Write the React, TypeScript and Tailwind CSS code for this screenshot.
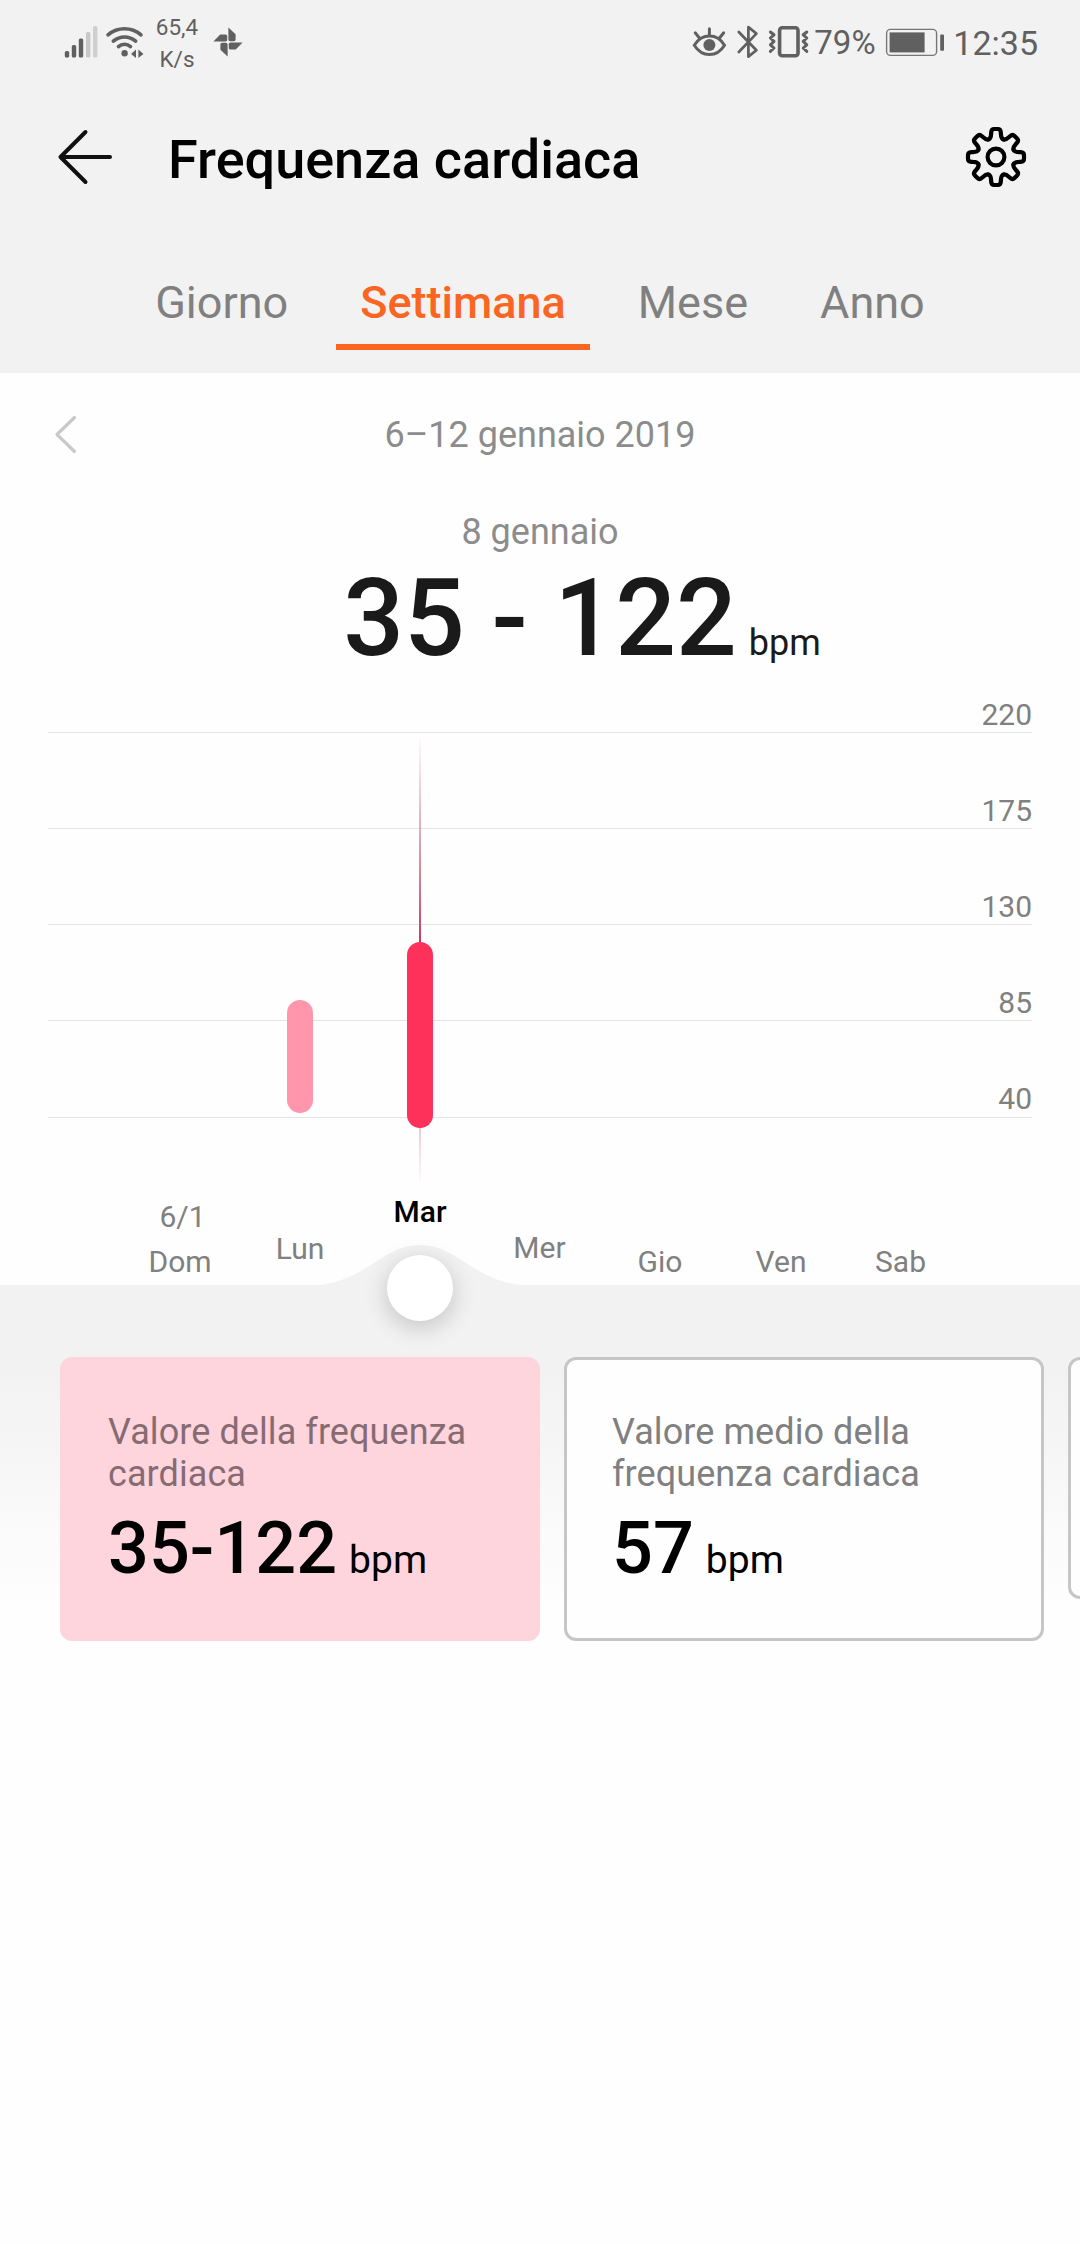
import React from "react";
import clsx from "clsx";

const INK = "#606060";

function SignalIcon() {
  return (
    <svg width="34" height="34" viewBox="64 25 34 34" fill={INK}>
      <rect x="64.8" y="51" width="4.4" height="6.4" rx="1.5" />
      <rect x="71.8" y="45" width="4.4" height="12.4" rx="1.5" />
      <rect x="78.8" y="38.5" width="4.4" height="18.9" rx="1.5" />
      <rect x="86" y="32" width="4.4" height="25.4" rx="1.5" fill="#c8c8c8" />
      <rect x="93" y="26" width="4.4" height="31.4" rx="1.5" fill="#cfcfcf" />
    </svg>
  );
}

function WifiIcon() {
  return (
    <svg width="40" height="34" viewBox="105 25 40 34" fill="none" stroke={INK} strokeWidth="3.6" strokeLinecap="round">
      <path d="M108 34.8 C117.5 26.8 131.5 26.8 141 34.8" />
      <path d="M113.3 41.2 C120 35.6 129 35.6 135.7 41.2" />
      <path d="M118.5 46.6 C122 43.4 127 43.4 130.5 46.6" />
      <circle cx="124.6" cy="53.2" r="3.2" fill={INK} stroke="none" />
      <path d="M131 54 L136 49.6 V58 Z M143.4 54 L138.4 49.6 V58 Z" fill={INK} stroke="none" />
    </svg>
  );
}

function PinwheelIcon() {
  return (
    <svg width="30" height="32" viewBox="213 27 30 32" fill={INK}>
      {[0, 90, 180, 270].map((a) => (
        <path
          key={a}
          transform={`rotate(${a} 228 43)`}
          d="M228.4 28.4 L235.6 35.2 V40.6 Q235.6 42.2 234 42.2 H230.2 Q228.4 42.2 228.4 40.4 Z"
        />
      ))}
    </svg>
  );
}

function EyeIcon() {
  return (
    <svg width="36" height="34" viewBox="691 25 36 34" fill="none" stroke={INK} strokeWidth="3" strokeLinecap="round">
      <path d="M694.3 45.2 C702 33 717 33 724.5 45.2 C717 57.6 702 57.6 694.3 45.2 Z" />
      <circle cx="709.4" cy="45" r="6" fill={INK} stroke="none" />
      <path d="M709.4 28.8 V35.4 M695.2 32.8 L699.6 38.2 M723.7 32.8 L719.3 38.2" />
    </svg>
  );
}

function BluetoothIcon() {
  return (
    <svg width="24" height="36" viewBox="736 24 24 36" fill="none" stroke={INK} strokeWidth="2.7" strokeLinejoin="round" strokeLinecap="round">
      <path d="M738.8 32 L756.4 50.2 L748.4 56.6 V27 L756.4 33.6 L738.8 52" />
    </svg>
  );
}

function VibrateIcon() {
  return (
    <svg width="42" height="34" viewBox="767 25 42 34" fill="none" stroke={INK} strokeWidth="3" strokeLinecap="round" strokeLinejoin="round">
      <rect x="779.6" y="27.8" width="18.4" height="28" rx="2.6" strokeWidth="3.6" />
      <path d="M770.4 32 L774 34.8 L770.4 38 L774 41.4 L770.4 44.8 L774 48 L770.4 51.4" />
      <path d="M806.8 32 L803.2 34.8 L806.8 38 L803.2 41.4 L806.8 44.8 L803.2 48 L806.8 51.4" />
    </svg>
  );
}

function BatteryIcon() {
  return (
    <svg width="60" height="30" viewBox="885 28 60 30">
      <rect x="886.6" y="29.4" width="50" height="26" rx="4" fill="none" stroke="#777" strokeWidth="1.4" />
      <rect x="889.6" y="32.4" width="35" height="20" fill={INK} />
      <rect x="940.2" y="34.4" width="3.8" height="16.4" rx="1" fill={INK} />
    </svg>
  );
}

function StatusBar() {
  return (
    <div className="flex h-[90px] items-start pl-16 pr-[42px] text-[#606060]">
      <div className="flex h-[84px] items-center">
        <SignalIcon />
        <div className="ml-[7px]">
          <WifiIcon />
        </div>
        <div className="ml-[10px] mt-px w-11 text-center text-[22.5px] leading-8">
          <div>65,4</div>
          <div>K/s</div>
        </div>
        <div className="ml-[14px]">
          <PinwheelIcon />
        </div>
      </div>
      <div className="ml-auto flex h-[84px] items-center">
        <EyeIcon />
        <div className="ml-[9px]">
          <BluetoothIcon />
        </div>
        <div className="ml-[7px]">
          <VibrateIcon />
        </div>
        <span className="ml-[5px] mt-[2px] w-[63px] text-[33px] leading-10">79%</span>
        <div className="ml-2 mt-px">
          <BatteryIcon />
        </div>
        <span className="ml-2 mt-[2px] text-[34px] leading-10">12:35</span>
      </div>
    </div>
  );
}

function GearIcon() {
  return (
    <svg width="64" height="64" viewBox="-32 -32 64 64" fill="none" stroke="#000" strokeWidth="4.2" strokeLinecap="round" strokeLinejoin="round">
      {[0, 45, 90, 135, 180, 225, 270, 315].map((a) => (
        <path
          key={a}
          transform={`rotate(${a})`}
          d="M-7.3 -17.6 C-5.4 -18.4 -5 -20.5 -4.9 -23 L-4.8 -24.6 Q-4.6 -28 -1.8 -28 H1.8 Q4.6 -28 4.8 -24.6 L4.9 -23 C5 -20.5 5.4 -18.4 7.3 -17.6"
        />
      ))}
      <circle r="8.4" />
    </svg>
  );
}

function Header() {
  return (
    <header className="flex h-[134px] items-center pl-14 pr-[52px]">
      <svg width="58" height="58" viewBox="0 0 58 58" fill="none" stroke="#111" strokeWidth="4" strokeLinecap="round" strokeLinejoin="round">
        <path d="M54 29 H4.5 M29.5 4 L4.5 29 L29.5 54" />
      </svg>
      <h1 className="ml-[54px] pt-[5px] text-[54px] font-medium leading-[64px] text-black">Frequenza cardiaca</h1>
      <div className="ml-auto">
        <GearIcon />
      </div>
    </header>
  );
}

const TABS = ["Giorno", "Settimana", "Mese", "Anno"];

function Tabs() {
  return (
    <nav className="mt-[38px] flex justify-center gap-6 pb-[23px]">
      {TABS.map((t) => (
        <div
          key={t}
          className={clsx(
            "h-[88px] border-b-[6px] px-6 text-[45px] leading-[82px]",
            t === "Settimana" ? "border-[#fb6522] font-medium text-[#fb6522]" : "border-transparent text-[#808080]",
          )}
        >
          {t}
        </div>
      ))}
    </nav>
  );
}

const AXIS = [
  { label: "220", size: "h-16" },
  { label: "175", size: "h-24" },
  { label: "130", size: "h-24" },
  { label: "85", size: "h-24" },
  { label: "40", size: "h-[97px] pb-px" },
];

const DAYS = [
  { name: "Dom", date: "6/1", cls: "pb-px" },
  { name: "Lun", cls: "pb-[14px]" },
  { name: "Mar", cls: "pb-[51px] font-medium text-black" },
  { name: "Mer", cls: "pb-[15px] pr-px" },
  { name: "Gio", cls: "pb-px" },
  { name: "Ven", cls: "pb-px pl-[2px]" },
  { name: "Sab", cls: "pb-px pl-px" },
];

function Chart() {
  return (
    <div className="relative">
      <div className="pl-12 pr-12">
        {AXIS.map((a) => (
          <div
            key={a.label}
            className={clsx("flex items-end justify-end border-b border-[#e4e4e4] text-[30px] leading-[34px] text-[#808080]", a.size)}
          >
            {a.label}
          </div>
        ))}
      </div>

      {/* Range bars and the marker line of the selected day */}
      <div className="absolute left-[419px] top-[66px] h-[207px] w-[2px] bg-linear-to-b from-transparent via-[#e0a3b3] to-[#c23a62]" />
      <div className="absolute left-[419px] top-[458px] h-[58px] w-[2px] bg-linear-to-b from-[#f0c8d1] to-transparent" />
      <div className="absolute left-[287px] top-[331px] h-[113px] w-[26px] rounded-full bg-[#ff96ab]" />
      <div className="absolute left-[407px] top-[273px] h-[186px] w-[26px] rounded-full bg-[#fd3159]" />

      <div className="flex h-[167px] items-end pl-[120px]">
        {DAYS.map((d) => (
          <div key={d.name} className={clsx("w-[120px] text-center text-[30px] leading-[45px]", d.name !== "Mar" && "text-[#808080]", d.cls)}>
            {d.date && <div className="pl-[5px]">{d.date}</div>}
            <div>{d.name}</div>
          </div>
        ))}
      </div>

      {/* Slider bump and knob */}
      <svg className="absolute bottom-[-1px] left-[300px]" width="240" height="42" viewBox="300 1244 240 42" fill="#f2f2f2">
        <path d="M305 1286 C365 1286 380 1245 420 1245 C460 1245 475 1286 535 1286 Z" />
      </svg>
      <div className="absolute bottom-[-36px] left-[387px] z-10 size-[66px] rounded-full bg-white shadow-[0_6px_24px_rgba(0,0,0,0.2)]" />
    </div>
  );
}

function StatCard({ title, value, active }: { title: string; value: string; active?: boolean }) {
  return (
    <div
      className={clsx(
        "h-[284px] w-[480px] shrink-0 rounded-xl border-[3px] pl-[45px] pr-10 pt-[51px]",
        active ? "border-[#fed4dd] bg-[#fed4dd]" : "border-[#c6c6c6] bg-[#fefefe]",
      )}
    >
      <p className={clsx("text-[36px] leading-[42px] tracking-[0.08px]", active ? "text-[#876b72]" : "text-[#808080]")}>{title}</p>
      <p className="mt-3 text-[72px] font-medium leading-[84px] text-black">
        {value}
        <span className="ml-3 text-[39px] font-normal">bpm</span>
      </p>
    </div>
  );
}

export default function App() {
  return (
    <div className="h-[2244px] w-[1080px] overflow-hidden bg-[#fefefe] font-[Roboto,sans-serif]">
      <div className="h-[373px] bg-[#f2f2f2]">
        <StatusBar />
        <Header />
        <Tabs />
      </div>

      <section className="h-[912px]">
        <div className="grid h-[123px] grid-cols-[1fr_auto_1fr] items-center text-[36px] text-[#8c8c8c]">
          <svg className="ml-[54px]" width="24" height="40" viewBox="0 0 24 40" fill="none" stroke="#c9c9c9" strokeWidth="3.2" strokeLinecap="round" strokeLinejoin="round">
            <path d="M20.5 2.5 L3 19.5 L20.5 36.5" />
          </svg>
          <span>6–12 gennaio 2019</span>
        </div>
        <div className="h-[71px] text-center text-[36px] leading-[73px] text-[#8c8c8c]">8 gennaio</div>
        <div className="grid h-[102px] grid-cols-[1fr_auto_1fr] items-baseline text-[#1a1a1a]">
          <span />
          <span className="text-[107px] font-medium leading-[104px]">35 - 122</span>
          <span className="ml-3 text-[36px]">bpm</span>
        </div>
        <Chart />
      </section>

      <section className="h-[356px] bg-linear-to-b from-[#f2f2f2] from-25% to-[#fefefe] to-90%">
        <div className="flex gap-6 pl-[60px] pt-[72px]">
          <StatCard active title="Valore della frequenza cardiaca" value="35-122" />
          <StatCard title="Valore medio della frequenza cardiaca" value="57" />
          <div className="h-[242px] w-[480px] shrink-0 rounded-xl border-[3px] border-[#c6c6c6] bg-[#fefefe]" />
        </div>
      </section>
    </div>
  );
}
